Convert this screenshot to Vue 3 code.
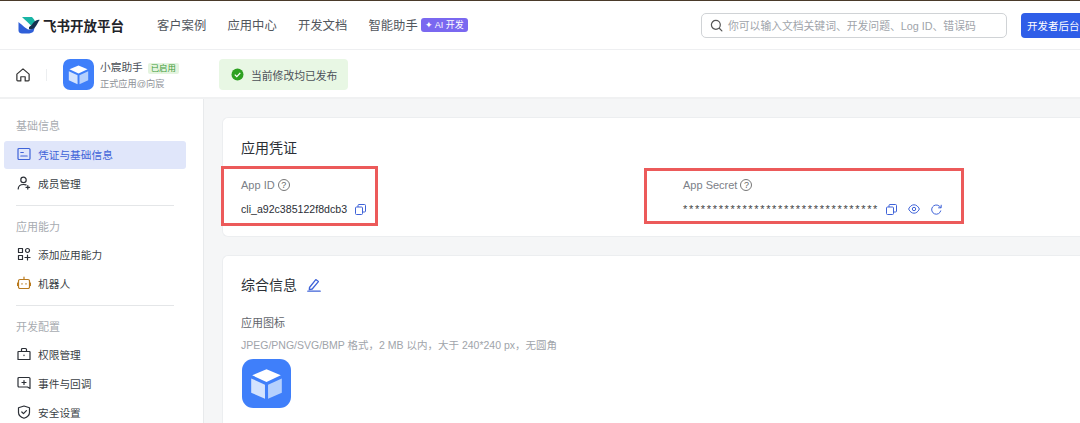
<template>
  <div class="page">
    <div class="top-line"></div>
    <header class="header">
      <div class="logo">
        <svg width="22" height="18" viewBox="0 0 22 18">
          <path d="M4 1h10c1.500 1.500 2.500 3 3.200 5L13 9.500C10 6.500 6.500 3.500 4 1z" fill="#19b5a5" />
          <path d="M0.500 6c3.500 3 8 7 10 7.500 2.500.5 5-1 6.500-3l-1.500 5c-1.500 1.500-3.500 2-6 2H4c-2 0-3.500-1-3.500-3z" fill="#2f5fd8" />
          <path d="M11 11c2.500-1 4-5 7-6.500 1.200-.6 2.500-.8 3.700-.6-1.500 1.500-2 3.500-3.700 6-1.500 2.500-4 4-7 3z" fill="#14304f" />
        </svg>
        <span class="logo-text">飞书开放平台</span>
      </div>
      <nav class="nav">
        <a v-for="item in navItems" :key="item">{{ item }}</a>
        <span class="assistant">
          <a>智能助手</a>
          <span class="ai-badge">✦ AI 开发</span>
        </span>
      </nav>
      <div class="search">
        <svg width="13" height="13" viewBox="0 0 14 14" fill="none" stroke="#555" stroke-width="1.300">
          <circle cx="6.300" cy="6.300" r="4.800" />
          <path d="M10 10l2.800 2.800" stroke-linecap="round" />
        </svg>
        <span>你可以输入文档关键词、开发问题、Log ID、错误码</span>
      </div>
      <button class="console-btn">开发者后台</button>
    </header>

    <div class="subbar">
      <svg class="home" width="14" height="14" viewBox="0 0 16 16" fill="none" stroke="#333" stroke-width="1.400" stroke-linejoin="round">
        <path d="M1 7L8 1l7 6v6.800a1 1 0 0 1-1 1h-3.500V10h-5v4.800H2a1 1 0 0 1-1-1z" />
      </svg>
      <i class="sub-divider"></i>
      <svg class="app-icon small" viewBox="0 0 48 48">
        <rect width="48" height="48" rx="11" fill="#3f7ffa" />
        <path d="M24 10l14 6-14 6.500L10 16z" fill="#fff" />
        <path d="M9 19l13.500 6.200V39L9 33z" fill="#d3e3fe" />
        <path d="M39 19l-13.500 6.200V39L39 33z" fill="#b5d0fd" />
      </svg>
      <div class="app-meta">
        <div class="app-name">小宸助手 <span class="enabled">已启用</span></div>
        <div class="app-sub">正式应用@向宸</div>
      </div>
      <div class="published">
        <svg width="13" height="13" viewBox="0 0 13 13">
          <circle cx="6.500" cy="6.500" r="6" fill="#2ea121" />
          <path d="M3.800 6.600l2 2 3.500-3.700" fill="none" stroke="#fff" stroke-width="1.300" />
        </svg>
        当前修改均已发布
      </div>
    </div>

    <div class="body">
      <aside class="sidebar">
        <section v-for="(group, i) in menu" :key="group.title" class="menu-group" :class="{ ruled: i < menu.length - 1 }">
          <div class="group-title">{{ group.title }}</div>
          <div v-for="entry in group.items" :key="entry.label" class="menu-item" :class="{ active: entry.active }">
            <svg width="14" height="14" viewBox="0 0 14 14" fill="none" :stroke="entry.color || '#2b2f36'" stroke-width="1.200" stroke-linecap="round" stroke-linejoin="round">
              <path :d="entry.icon" />
            </svg>
            <span>{{ entry.label }}</span>
          </div>
        </section>
      </aside>

      <main class="main">
        <section class="card creds">
          <h2>应用凭证</h2>
          <div class="cred-row">
            <div class="cred cred-id">
              <div class="cred-label">App ID <span class="help">?</span></div>
              <div class="cred-value">
                cli_a92c385122f8dcb3
                <svg class="action" width="11" height="11" viewBox="0 0 11 11" fill="none" stroke="#3f63d8" stroke-width="1">
                  <rect x="0.500" y="3" width="7" height="7.500" rx="1" />
                  <path d="M3 3V1.500a1 1 0 0 1 1-1h5.500a1 1 0 0 1 1 1V7a1 1 0 0 1-1 1H8" />
                </svg>
              </div>
            </div>
            <div class="cred cred-secret">
              <div class="cred-label">App Secret <span class="help">?</span></div>
              <div class="cred-value">
                <span class="stars">*********************************</span>
                <svg class="action" width="11" height="11" viewBox="0 0 11 11" fill="none" stroke="#3f63d8" stroke-width="1">
                  <rect x="0.500" y="3" width="7" height="7.500" rx="1" />
                  <path d="M3 3V1.500a1 1 0 0 1 1-1h5.500a1 1 0 0 1 1 1V7a1 1 0 0 1-1 1H8" />
                </svg>
                <svg class="action" width="12" height="10" viewBox="0 0 12 10" fill="none" stroke="#3f63d8" stroke-width="1">
                  <path d="M.6 5C2 2 4 .8 6 .8S10 2 11.400 5C10 8 8 9.200 6 9.200S2 8 .6 5z" />
                  <circle cx="6" cy="5" r="1.700" />
                </svg>
                <svg class="action" width="11" height="11" viewBox="0 0 11 11" fill="none" stroke="#3f63d8" stroke-width="1">
                  <path d="M9.800 6.500A4.600 4.600 0 1 1 8.500 2.300L10 3.600" />
                  <path d="M10.200 .8v3h-3" />
                </svg>
              </div>
            </div>
          </div>
          <div class="mark mark-id"></div>
          <div class="mark mark-secret"></div>
        </section>

        <section class="card info">
          <h2>
            综合信息
            <svg width="14" height="14" viewBox="0 0 14 14" fill="none" stroke="#3f63d8" stroke-width="1.300" stroke-linejoin="round">
              <path d="M2.500 9.500L8.800 1.600l2.600 2-6.200 7.400-2.900.6z" />
              <path d="M.8 13.200h12.400" stroke-linecap="round" />
            </svg>
          </h2>
          <div class="field-label">应用图标</div>
          <div class="field-hint">JPEG/PNG/SVG/BMP 格式，2 MB 以内，大于 240*240 px，无圆角</div>
          <svg class="app-icon large" viewBox="0 0 48 48">
            <rect width="48" height="48" rx="11" fill="#3f7ffa" />
            <path d="M24 10l14 6-14 6.500L10 16z" fill="#fff" />
            <path d="M9 19l13.500 6.200V39L9 33z" fill="#d3e3fe" />
            <path d="M39 19l-13.500 6.200V39L39 33z" fill="#b5d0fd" />
          </svg>
        </section>
      </main>
    </div>
  </div>
</template>

<script setup>
const navItems = ['客户案例', '应用中心', '开发文档']

const menu = [
  {
    title: '基础信息',
    items: [
      { label: '凭证与基础信息', active: true, color: '#3f63d8', icon: 'M2 1.500h10a1 1 0 0 1 1 1v9a1 1 0 0 1-1 1H2a1 1 0 0 1-1-1v-9a1 1 0 0 1 1-1zM3.800 5.500h2.500M3.800 9h6.400' },
      { label: '成员管理', icon: 'M6.500 1.200a2.700 2.700 0 1 1 0 5.400 2.700 2.700 0 0 1 0-5.400zM1.200 13c0-3 2-4.500 5.300-4.500 1 0 1.800.1 2.500.4M10.800 9.500v3.600M9 11.300h3.600' }
    ]
  },
  {
    title: '应用能力',
    items: [
      { label: '添加应用能力', icon: 'M1.500 1.500h4v4h-4zM1.500 8.500h4v4h-4zM10.500 1.500a2 2 0 1 1 0 4 2 2 0 0 1 0-4zM10.500 8v5M8 10.500h5' },
      { label: '机器人', color: '#b97a1e', icon: 'M3 3.500h8a1.500 1.500 0 0 1 1.500 1.500v6a1.500 1.500 0 0 1-1.500 1.500H3A1.500 1.500 0 0 1 1.500 11V5A1.500 1.500 0 0 1 3 3.500zM7 1v2.500M.5 7v2.500M13.500 7v2.500M5 7.500v.6M9 7.500v.6' }
    ]
  },
  {
    title: '开发配置',
    items: [
      { label: '权限管理', icon: 'M1.500 4.500h11a.5.5 0 0 1 .5.500v7.500H1V5a.5.5 0 0 1 .5-.5zM4.500 4.500V2.500a1 1 0 0 1 1-1h3a1 1 0 0 1 1 1v2M7 8v.6' },
      { label: '事件与回调', icon: 'M2 1.500h10a1 1 0 0 1 1 1v10l-2.500-1.500H2a1 1 0 0 1-1-1v-7.500a1 1 0 0 1 1-1zM7 4.500v4M5 6.500h4' },
      { label: '安全设置', icon: 'M7 1l5.500 1.800v4.700c0 2.800-2.500 4.700-5.500 5.700-3-1-5.500-2.900-5.500-5.700V2.800zM4.800 7l1.700 1.700 2.900-3' }
    ]
  }
]
</script>

<style>
html, body {
  margin: 0;
  overflow: hidden;
}
</style>

<style scoped>
.page {
  width: 1080px;
  height: 423px;
  overflow: hidden;
  display: flex;
  flex-direction: column;
  background: #fff;
  color: #2b2f36;
  font-family: "Liberation Sans", "Noto Sans CJK SC", sans-serif;
}
.top-line {
  height: 1px;
  flex: none;
  background: #4a3a2a;
}
.header {
  height: 48px;
  flex: none;
  display: flex;
  align-items: center;
  padding-left: 18px;
  border-bottom: 1px solid #eeeff1;
  white-space: nowrap;
}
.logo {
  display: flex;
  align-items: center;
  gap: 3px;
  width: 139px;
  flex: none;
}
.logo-text {
  font-size: 13.500px;
  font-weight: 700;
  color: #1f2329;
}
.nav {
  display: flex;
  align-items: center;
  gap: 21.300px;
  font-size: 12.300px;
  color: #51565d;
  width: 544px;
  flex: none;
}
.assistant {
  display: flex;
  align-items: center;
  gap: 3px;
}
.ai-badge {
  font-size: 9px;
  line-height: 14px;
  padding: 0 4px;
  border-radius: 3px;
  color: #fff;
  background: #7a68f0;
}
.search {
  width: 306px;
  height: 25px;
  flex: none;
  display: flex;
  align-items: center;
  gap: 5px;
  padding-left: 8px;
  box-sizing: border-box;
  border: 1px solid #d0d3d6;
  border-radius: 5px;
  font-size: 10.800px;
  color: #a0a4aa;
}
.console-btn {
  width: 59px;
  height: 25px;
  margin-left: 14px;
  flex: none;
  border: 0;
  border-radius: 4px 0 0 4px;
  background: #2f5ee8;
  color: #fff;
  font: inherit;
  font-size: 10.500px;
  white-space: nowrap;
  text-align: left;
  padding: 0 0 0 6px;
}
.subbar {
  height: 49px;
  flex: none;
  display: flex;
  align-items: center;
  padding: 2px 0 0 16px;
  box-sizing: border-box;
  border-bottom: 2px solid #f0f1f2;
}
.sub-divider {
  width: 1px;
  height: 12px;
  margin: 0 16px;
  background: #eceef0;
}
.app-icon.small {
  width: 31px;
  height: 31px;
}
.app-meta {
  width: 119px;
  margin-left: 6px;
}
.app-name {
  font-size: 10.700px;
  line-height: 15px;
  color: #4b5057;
}
.enabled {
  display: inline-block;
  margin-left: 2px;
  padding: 0 3px;
  font-size: 8.400px;
  line-height: 11px;
  border-radius: 2px;
  color: #3d9a38;
  background: #e4f4df;
}
.app-sub {
  margin-top: 3px;
  font-size: 9.200px;
  line-height: 12px;
  color: #8f9399;
}
.published {
  width: 129px;
  height: 31px;
  display: flex;
  align-items: center;
  gap: 7px;
  padding-left: 12px;
  box-sizing: border-box;
  border-radius: 4px;
  background: #e8f7e4;
  font-size: 10.800px;
  color: #4c5158;
}
.body {
  flex: 1;
  min-height: 0;
  display: flex;
}
.sidebar {
  width: 204px;
  flex: none;
  padding: 20px 0 0 4px;
  box-sizing: border-box;
  border-right: 1px solid #e8eaec;
}
.menu-group.ruled {
  position: relative;
  padding-bottom: 7px;
  margin-bottom: 14px;
}
.menu-group.ruled::after {
  content: "";
  position: absolute;
  left: 12px;
  bottom: 0;
  width: 158px;
  height: 1px;
  background: #e4e6e8;
}
.group-title {
  padding-left: 12px;
  font-size: 11px;
  line-height: 14px;
  color: #a8acb1;
  margin-bottom: 7px;
}
.menu-group:first-child .group-title {
  margin-bottom: 8px;
}
.menu-item {
  width: 182px;
  height: 28px;
  margin-bottom: 1px;
  display: flex;
  align-items: center;
  gap: 7px;
  padding: 0 0 2px 13px;
  box-sizing: border-box;
  border-radius: 3px;
  font-size: 10.700px;
  color: #3a3f46;
}
.menu-item.active {
  background: #e0e6fa;
  color: #3f63d8;
}
.main {
  flex: 1;
  min-width: 0;
  padding: 18px 0 0 18px;
  background: #f5f6f7;
  display: flex;
  flex-direction: column;
  gap: 18px;
}
.card {
  flex: none;
  position: relative;
  background: #fff;
  border: 1px solid #eceef0;
  border-right: 0;
  border-radius: 6px 0 0 6px;
  padding-left: 18px;
  height: 120px;
  box-sizing: border-box;
}
.card h2 {
  margin: 0;
  font-size: 14px;
  line-height: 20px;
  font-weight: 400;
  color: #2b2f36;
  display: flex;
  align-items: center;
  gap: 10px;
}
.creds {
  padding-top: 20px;
}
.cred-row {
  display: flex;
  margin-top: 20px;
}
.cred-id {
  width: 442px;
}
.cred-label {
  font-size: 11px;
  line-height: 14px;
  color: #7b8087;
  display: flex;
  align-items: center;
  gap: 3px;
}
.help {
  width: 12px;
  height: 12px;
  box-sizing: border-box;
  border: 1px solid #777;
  border-radius: 50%;
  font-size: 9px;
  line-height: 10px;
  text-align: center;
  color: #666;
}
.cred-value {
  margin-top: 10px;
  display: flex;
  align-items: center;
  font-size: 10.600px;
  line-height: 14px;
  color: #2b2f36;
}
.cred-id .action {
  margin-left: 8px;
}
.cred-secret .action {
  margin-left: 11px;
}
.cred-secret .stars + .action {
  margin-left: 7px;
}
.stars {
  font-size: 11px;
  letter-spacing: 1.660px;
  color: #444;
}
.mark {
  position: absolute;
  box-sizing: border-box;
  border: 3px solid #ec5a5a;
}
.mark-id {
  left: -2px;
  top: 48px;
  width: 157px;
  height: 60px;
}
.mark-secret {
  left: 421px;
  top: 50px;
  width: 320px;
  height: 56px;
}
.info {
  padding-top: 19px;
  height: 200px;
}
.field-label {
  margin-top: 21px;
  font-size: 11px;
  line-height: 14px;
  color: #62666c;
}
.field-hint {
  margin-top: 8px;
  font-size: 10.500px;
  line-height: 14px;
  color: #a0a4aa;
}
.app-icon.large {
  display: block;
  width: 49px;
  height: 49px;
  margin: 7px 0 0 1px;
}
</style>
